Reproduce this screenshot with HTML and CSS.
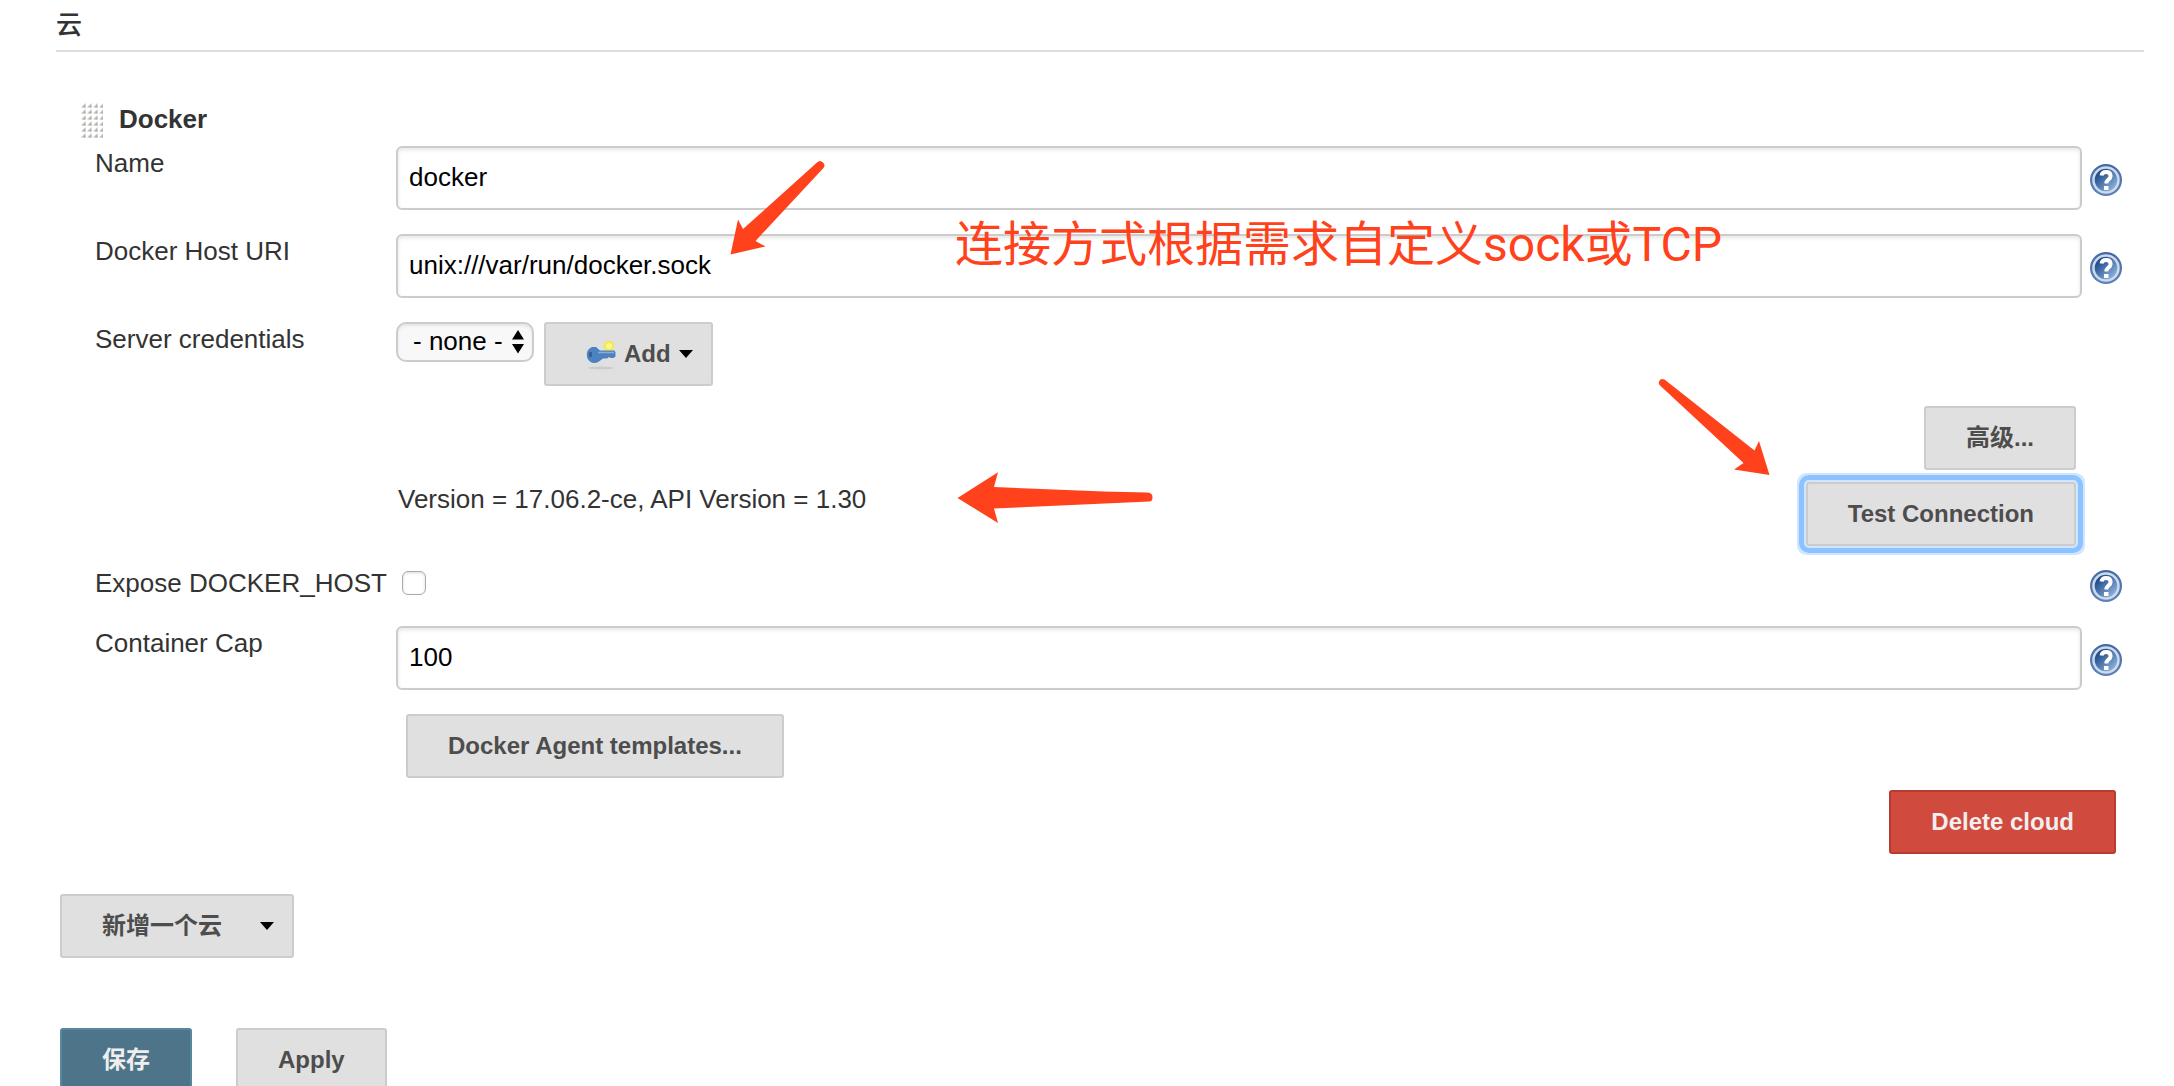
FILE: index.html
```html
<!DOCTYPE html>
<html lang="zh-CN">
<head>
<meta charset="utf-8">
<title>系统设置 - 云</title>
<link rel="stylesheet" href="styles.css">
</head>
<body>
<svg class="defs" aria-hidden="true">
  <defs>
    <linearGradient id="help-fill" x1="0" y1="0" x2="1" y2="1">
      <stop offset="0.2" stop-color="#1f4a8a"/>
      <stop offset="0.85" stop-color="#8db2dc"/>
    </linearGradient>
    <linearGradient id="help-rim" x1="0" y1="0" x2="0" y2="1">
      <stop offset="0" stop-color="#4069a6"/>
      <stop offset="1" stop-color="#5f83b8"/>
    </linearGradient>
    <symbol id="help" viewBox="0 0 32 32">
      <circle cx="16" cy="16" r="16" fill="url(#help-rim)"/>
      <circle cx="16" cy="16" r="12.500" fill="url(#help-fill)" stroke="#cddaec" stroke-width="2.500"/>
      <path d="M11.500 11.500C12 8.800 13.800 8 16 8c2.800 0 4.600 1.500 4.600 3.900 0 3.600-4.300 3.600-4.300 7.600" fill="none" stroke="#fff" stroke-width="4"/>
      <rect x="14" y="22" width="4.500" height="4" fill="#fff"/>
    </symbol>
    <pattern id="grip-dots" width="6" height="6" patternUnits="userSpaceOnUse">
      <path d="M0 5.500L4.500 1v4.500z" fill="#c2c2be"/>
      <path d="M2 5.500L4.500 3v2.500z" fill="#a9a9a5"/>
    </pattern>
  </defs>
</svg>

<form class="page">
  <h1 class="section-title">云</h1>

  <section class="cloud">
    <h2 class="cloud-title">
      <svg class="grip" viewBox="0 0 22 36" aria-hidden="true"><rect width="22" height="36" fill="url(#grip-dots)"/></svg>
      Docker
    </h2>

    <div class="row">
      <label class="label" for="name">Name</label>
      <input class="text" id="name" type="text" value="docker">
      <a class="help" href="#" aria-label="Help: Name"><svg><use href="#help"/></svg></a>
    </div>

    <div class="row">
      <label class="label" for="uri">Docker Host URI</label>
      <div class="field">
        <input class="text" id="uri" type="text" value="unix:///var/run/docker.sock">
        <svg class="arrow arrow-uri" viewBox="0 0 100 100" aria-hidden="true"><path d="M4.500 94.500L12 59.500l5 9.500L91 2.500q3-3 6 0t0 6L29.500 81l10 5.500z"/></svg>
        <p class="note">连接方式根据需求自定义sock或TCP</p>
      </div>
      <a class="help" href="#" aria-label="Help: Docker Host URI"><svg><use href="#help"/></svg></a>
    </div>

    <div class="row row-near">
      <label class="label" for="cred">Server credentials</label>
      <div class="inline">
        <div class="select-wrap">
          <select class="select" id="cred"><option>- none -</option></select>
          <svg class="updown" viewBox="0 0 12 24" aria-hidden="true"><path d="M0 9.500L6 0l6 9.500zM0 14h12L6 23.500z"/></svg>
        </div>
        <button class="btn btn-menu" type="button">
          <svg class="key" viewBox="0 0 30 32" aria-hidden="true">
            <ellipse cx="15" cy="30" rx="13" ry="1.500" fill="#cbcbcb"/>
            <circle cx="23" cy="8" r="5.500" fill="#f0e85a"/>
            <circle cx="23" cy="8" r="3" fill="#fbf98e"/>
            <path d="M6 9h4l4 3.500h14.500l1 2v4l-2 1.500h-3l-1.500-1-2 1.500h-4l-4 3q-5 3-9 0-4-3-3-9 1-4 5-5.500z" fill="#4c82c0"/>
            <path d="M12 14.500h16" stroke="#86addb" stroke-width="1.500"/>
            <rect x="3" y="14" width="3" height="5" rx="1" fill="#34608f"/>
          </svg>
          Add
          <svg class="caret" viewBox="0 0 14 8" aria-hidden="true"><path d="M0 0h14L7 8z"/></svg>
        </button>
      </div>
    </div>

    <div class="actions">
      <button class="btn" type="button">高级...</button>
    </div>

    <div class="row row-near">
      <div class="result">
        Version = 17.06.2-ce, API Version = 1.30
        <svg class="arrow arrow-version" viewBox="0 0 200 56" aria-hidden="true"><path d="M3.500 30L44 4.300 40 19l110 4.500 42.500 1q6 0 6 4.500t-3 4.500L40 40.500 44 55z"/></svg>
      </div>
      <div class="test">
        <svg class="arrow arrow-test" viewBox="0 0 120 100" aria-hidden="true"><path d="M114.500 96L104 62l-4.500 9.500L9.500 0.500Q6-1 4.500 1.500t0 4.500L88.500 84 79 90.500z"/></svg>
        <button class="btn btn-focus" type="button">Test Connection</button>
      </div>
    </div>

    <div class="row row-check">
      <label class="label" for="expose">Expose DOCKER_HOST</label>
      <input class="check" id="expose" type="checkbox">
      <a class="help" href="#" aria-label="Help: Expose DOCKER_HOST"><svg><use href="#help"/></svg></a>
    </div>

    <div class="row">
      <label class="label" for="cap">Container Cap</label>
      <input class="text" id="cap" type="text" value="100">
      <a class="help" href="#" aria-label="Help: Container Cap"><svg><use href="#help"/></svg></a>
    </div>

    <div class="templates">
      <button class="btn" type="button">Docker Agent templates...</button>
    </div>

    <div class="delete">
      <button class="btn btn-danger" type="button">Delete cloud</button>
    </div>
  </section>

  <div class="add-cloud">
    <button class="btn btn-menu btn-add" type="button">新增一个云
      <svg class="caret" viewBox="0 0 14 8" aria-hidden="true"><path d="M0 0h14L7 8z"/></svg>
    </button>
  </div>

  <div class="footer">
    <button class="btn btn-primary" type="submit">保存</button>
    <button class="btn" type="button">Apply</button>
  </div>
</form>
</body>
</html>
```
FILE: styles.css
```css
* { box-sizing: border-box; }

body {
  margin: 0;
  background: #fff;
  color: #333;
  font: 26px/30px "Liberation Sans", "Noto Sans CJK SC", sans-serif;
}

.defs { position: absolute; width: 0; height: 0; }

.page { padding: 10px 30px 0 56px; }

.section-title {
  margin: 0;
  padding-bottom: 10px;
  border-bottom: 2px solid #ddd;
  font-size: 26px;
  line-height: 30px;
  font-weight: 500;
}

.cloud { padding: 50px 22px 0 39px; }

.cloud-title {
  display: flex;
  align-items: flex-start;
  gap: 16px;
  margin: 0 0 8px -14px;
  font-size: 26px;
  line-height: 34px;
}
.grip { width: 22px; height: 36px; }

.row {
  display: grid;
  grid-template-columns: 301px minmax(0, 1fr) 32px;
  align-items: start;
  padding-bottom: 24px;
}
.row-near { padding-bottom: 20px; }

.label, .result { padding-top: 2px; }

.field { position: relative; margin-right: 8px; }

.text {
  width: calc(100% - 8px);
  height: 64px;
  padding: 0 11px 2px;
  border: 2px solid #ccc;
  border-radius: 6px;
  background: #fff;
  box-shadow: inset 0 2px 4px rgba(0, 0, 0, 0.1);
  color: #000;
  font: inherit;
}
.field .text { width: 100%; }

.help { display: block; padding-top: 18px; }
.help svg { display: block; width: 32px; height: 32px; }

.inline { display: flex; align-items: flex-start; gap: 10px; }

.select-wrap { position: relative; }
.select {
  display: block;
  width: 138px;
  height: 40px;
  padding: 0 0 2px 15px;
  border: 2px solid #ccc;
  border-radius: 10px;
  background: #f8f8f8;
  box-shadow: inset 0 2px 3px rgba(0, 0, 0, 0.08);
  color: #000;
  font: inherit;
  appearance: none;
}
.updown {
  position: absolute;
  top: 8px;
  right: 10px;
  width: 12px;
  height: 24px;
  pointer-events: none;
}

.btn {
  display: inline-flex;
  align-items: center;
  justify-content: center;
  height: 64px;
  padding: 0 40px;
  border: 2px solid #ccc;
  border-radius: 3px;
  background: #e0e0e0;
  color: #4d4d4d;
  font: bold 24px/30px "Liberation Sans", "Noto Sans CJK SC", sans-serif;
  white-space: nowrap;
}
.btn-menu { gap: 8px; padding-right: 18px; }
.btn-add { gap: 38px; }
.btn-focus { outline: 5px solid #8bc2ff; outline-offset: 2px; box-shadow: 0 0 0 9px #d0e6ff; }
.btn-danger { border-color: #b83b31; background: #d04a3e; color: #f2eeee; }
.btn-primary { border-color: #5788a0; background: #4d7489; color: #eee; }

.key { width: 30px; height: 32px; }
.caret { width: 14px; height: 8px; fill: #000; }

.actions { display: flex; justify-content: flex-end; padding: 0 46px 12px 0; }

.result { position: relative; grid-column: 2; grid-row: 1; padding-left: 2px; }
.test { position: relative; grid-column: 2; grid-row: 1; justify-self: end; padding-right: 14px; }

.row-check .label { white-space: nowrap; }
.row-check .help { padding-top: 4px; }
.check {
  width: 24px;
  height: 24px;
  margin: 5px 0 0 6px;
  border: 1px solid #aaa;
  border-radius: 6px;
  background: #fff;
  box-shadow: inset 0 1px 3px rgba(0, 0, 0, 0.15);
  appearance: none;
}

.templates { padding-left: 311px; }
.delete { display: flex; justify-content: flex-end; padding: 12px 6px 40px 0; }
.add-cloud { padding: 0 4px 70px; }
.templates, .add-cloud { display: flex; }
.footer { display: flex; gap: 44px; padding: 0 4px; }

/* Hand-drawn callouts over the form */
.arrow { position: absolute; fill: #ff421c; pointer-events: none; overflow: visible; }
.arrow-uri { left: 330px; top: -74px; width: 100px; height: 100px; }
.arrow-version { left: 558px; top: -14px; width: 200px; height: 56px; }
.arrow-test { right: 315px; top: -103px; width: 120px; height: 100px; }

.note {
  position: absolute;
  left: 559px;
  top: -19px;
  margin: 0;
  color: #ff421c;
  font: 400 48px/60px Roboto, "Noto Sans CJK SC", sans-serif;
  white-space: nowrap;
  pointer-events: none;
}
```
